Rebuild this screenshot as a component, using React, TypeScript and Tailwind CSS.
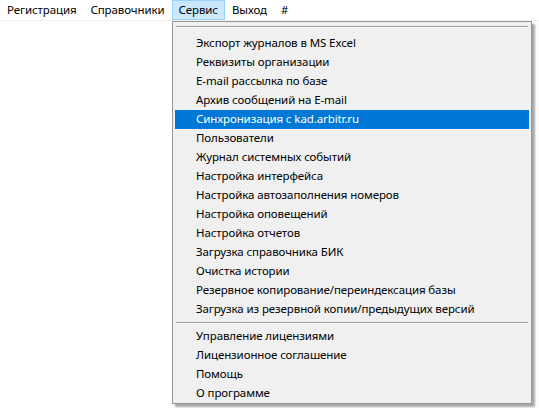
import React from "react";

const topMenu = ["Регистрация", "Справочники", "Сервис", "Выход", "#"];

const serviceItems = [
  "Экспорт журналов в MS Excel",
  "Реквизиты организации",
  "E-mail рассылка по базе",
  "Архив сообщений на E-mail",
  "Синхронизация с kad.arbitr.ru",
  "Пользователи",
  "Журнал системных событий",
  "Настройка интерфейса",
  "Настройка автозаполнения номеров",
  "Настройка оповещений",
  "Настройка отчетов",
  "Загрузка справочника БИК",
  "Очистка истории",
  "Резервное копирование/переиндексация базы",
  "Загрузка из резервной копии/предыдущих версий",
];

const helpItems = ["Управление лицензиями", "Лицензионное соглашение", "Помощь", "О программе"];

const Separator = () => (
  <div className="py-[3px] px-[1px]">
    <div className="h-[1px] bg-[#a0a0a0]" />
    <div className="h-[1px] bg-white" />
  </div>
);

const App = () => {
  const active = "Сервис";
  const selected = "Синхронизация с kad.arbitr.ru";

  const Item = ({ label }: { label: string }) => (
    <div
      className={`h-[19px] flex items-center pl-[21px] pb-[1px] whitespace-nowrap ${
        label === selected ? "bg-[#0078d7] text-white" : "text-black"
      }`}
    >
      {label}
    </div>
  );

  return (
    <div
      className="relative w-[539px] h-[408px] bg-white text-[11.5px] tracking-[-0.1px] overflow-hidden"
      style={{ fontFamily: '"Noto Sans", "Open Sans", sans-serif' }}
    >
      <div className="flex h-[21px] items-stretch border-b border-[#f0f0f0]">
        {topMenu.map((m) => (
          <div
            key={m}
            className={`flex items-center px-[6px] pb-[1px] border ${
              m === active ? "bg-[#cce8ff] border-[#99d1ff]" : "border-transparent"
            }`}
          >
            {m}
          </div>
        ))}
      </div>

      <div className="absolute left-[172px] top-[21px] w-[360px] h-[383px] bg-[#f0f0f0] border border-[#979797] shadow-[3px_3px_2px_rgba(0,0,0,0.35)] px-[2px] pt-[1px]">
        <Separator />
        <div className="pt-[3px]">
          {serviceItems.map((s) => (
            <Item key={s} label={s} />
          ))}
        </div>
        <Separator />
        {helpItems.map((s) => (
          <Item key={s} label={s} />
        ))}
      </div>
    </div>
  );
};

export default App;
